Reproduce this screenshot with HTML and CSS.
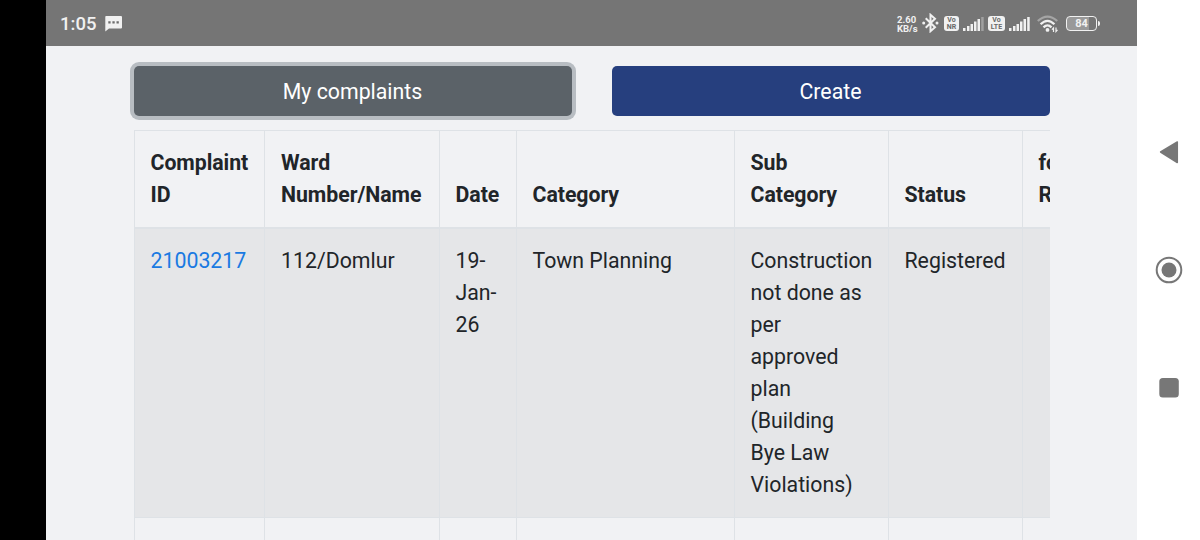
FILE: index.html
```html
<!DOCTYPE html>
<html lang="en">
<head>
    <meta charset="UTF-8">
    <meta name="viewport" content="width=device-width, initial-scale=1.0">
    <title>My complaints</title>
    <link rel="stylesheet" href="styles.css">
</head>
<body>
    <div class="screen">
        <div class="app">
            <!-- Status bar -->
            <header class="status-bar">
                <span class="time">1:05</span>
                <svg class="chat" width="17" height="16" viewBox="0 0 17 16">
                    <path fill="#f1f1f1" d="M1 0h15a1 1 0 0 1 1 1v10.500a1 1 0 0 1-1 1H4L.3 15.500V1a1 1 0 0 1 .7-1z"/>
                    <path fill="#6d6d6d" d="M3.300 5.200h2.300v2.300H3.300zM7.400 5.200h2.300v2.300H7.400zM11.500 5.200h2.300v2.300h-2.300z"/>
                </svg>
                <div class="status-icons">
                    <span class="speed"><b>2.60</b><b>KB/s</b></span>
                    <svg class="bluetooth" width="17" height="20" viewBox="0 0 17 20">
                        <path fill="none" stroke="#f1f1f1" stroke-width="2" d="M3.700 5.200l9.300 9-4.500 4V1.800l4.500 4-9.300 9"/>
                        <circle cx="1.700" cy="10" r="1.500" fill="#f1f1f1"/>
                        <circle cx="15" cy="10" r="1.500" fill="#f1f1f1"/>
                    </svg>
                    <span class="volte"><b>Vo</b><b>NR</b></span>
                    <svg class="signal" width="21" height="14" viewBox="0 0 21 14">
                        <path fill="#f1f1f1" d="M0 11h2.500v3H0zM4 9h2.500v5H4zM7.500 7H10v7H7.500zM11 4.500h2.500V14H11zM14.500 2H17v12h-2.500z"/>
                        <path fill="#a0a0a0" d="M18.200 0h2.500v14h-2.500z"/>
                    </svg>
                    <span class="volte volte-second"><b>Vo</b><b>LTE</b></span>
                    <svg class="signal" width="21" height="14" viewBox="0 0 21 14">
                        <path fill="#f1f1f1" d="M0 11h2.500v3H0zM4 9h2.500v5H4zM7.500 7H10v7H7.500zM11 4.500h2.500V14H11zM14.500 2H17v12h-2.500zM18.200 0h2.500v14h-2.500z"/>
                    </svg>
                    <svg class="wifi" width="22" height="18" viewBox="0 0 22 18">
                        <g fill="none" stroke-width="2.300">
                            <path stroke="#a5a5a5" d="M.8 6Q10.500-2.800 20.200 6"/>
                            <path stroke="#f1f1f1" d="M3.600 9.300Q10.500 2.300 17.400 9.300M6.500 12.400Q10.500 8.400 14.500 12.400"/>
                        </g>
                        <circle cx="10.500" cy="14.900" r="1.900" fill="#f1f1f1"/>
                        <path fill="none" stroke="#f1f1f1" stroke-width="1.200" d="M16.500 17v-4l-1.500 1.700M19 12.500v4l1.500-1.700"/>
                    </svg>
                    <span class="battery">84</span>
                </div>
            </header>

            <main class="content">
                <div class="buttons">
                    <button type="button" class="btn btn-secondary">My complaints</button>
                    <button type="button" class="btn btn-primary">Create</button>
                </div>

                <div class="table-wrap">
                    <table class="table">
                        <colgroup>
                            <col class="col-id">
                            <col class="col-ward">
                            <col class="col-date">
                            <col class="col-category">
                            <col class="col-sub">
                            <col class="col-status">
                            <col class="col-reopen">
                        </colgroup>
                        <thead>
                            <tr>
                                <th>Complaint ID</th>
                                <th>Ward Number/Name</th>
                                <th>Date</th>
                                <th>Category</th>
                                <th>Sub Category</th>
                                <th>Status</th>
                                <th>for<br>Reopen</th>
                            </tr>
                        </thead>
                        <tbody>
                            <tr>
                                <td><a href="#">21003217</a></td>
                                <td>112/Domlur</td>
                                <td>19-<br>Jan-<br>26</td>
                                <td>Town Planning</td>
                                <td>Construction not done as per approved plan (Building Bye Law Violations)</td>
                                <td>Registered</td>
                                <td></td>
                            </tr>
                            <tr class="next-row">
                                <td></td>
                                <td></td>
                                <td></td>
                                <td></td>
                                <td></td>
                                <td></td>
                                <td></td>
                            </tr>
                        </tbody>
                    </table>
                </div>
            </main>
        </div>

        <!-- Phone navigation -->
        <nav class="phone-nav">
            <svg width="28" height="28" viewBox="0 0 28 28">
                <path fill="#777" stroke="#777" stroke-width="1.500" stroke-linejoin="round" d="M5.600 14L22.300 4v20.500z"/>
            </svg>
            <svg width="28" height="28" viewBox="0 0 28 28">
                <circle cx="14" cy="14" r="12.300" fill="none" stroke="#777" stroke-width="2"/>
                <circle cx="14" cy="14" r="7.500" fill="#777"/>
            </svg>
            <svg width="28" height="28" viewBox="0 0 28 28">
                <rect x="4.300" y="4" width="19.500" height="19.500" rx="3.500" fill="#777"/>
            </svg>
        </nav>
    </div>
</body>
</html>
```
FILE: styles.css
```css
* {
    box-sizing: border-box;
}

body {
    margin: 0;
    font-family: Roboto, sans-serif;
    font-size: 21.3px;
    line-height: 32px;
    color: #212529;
    background: #000;
}

.screen {
    display: flex;
    height: 540px;
    padding-left: 46px;
    overflow: hidden;
}

.app {
    flex: 1;
    height: 540px;
    overflow: hidden;
    background: #f1f2f4;
}

.status-bar {
    display: flex;
    align-items: center;
    height: 46px;
    padding: 1px 37px 0 14px;
    background: #757575;
    color: #f1f1f1;
}

.time {
    width: 45px;
    font-size: 18.5px;
    font-weight: 500;
    white-space: nowrap;
}

.status-icons {
    display: flex;
    align-items: center;
    margin-left: auto;
}

.speed {
    display: flex;
    flex-direction: column;
    width: 21px;
    margin-right: 4px;
    font-size: 9.5px;
    line-height: 9px;
}

.bluetooth {
    margin-right: 5px;
    margin-top: -2px;
}

.volte {
    display: flex;
    flex-direction: column;
    align-items: center;
    justify-content: center;
    width: 15px;
    height: 15px;
    margin-right: 4px;
    border-radius: 3px;
    background: #f1f1f1;
    color: #696969;
    font-size: 7px;
    line-height: 6.5px;
}

.volte-second {
    width: 17px;
    margin-left: 4px;
}

.wifi {
    margin-left: 7px;
    margin-right: 7px;
}

.battery {
    position: relative;
    width: 31px;
    height: 15px;
    margin-right: 3px;
    border: 1.5px solid #f1f1f1;
    border-radius: 4px;
    background: linear-gradient(90deg, #999 75%, #757575 75%);
    font-size: 11px;
    font-weight: 700;
    line-height: 13px;
    text-align: center;
}

.battery::after {
    content: "";
    position: absolute;
    top: 4px;
    right: -4px;
    width: 2px;
    height: 5px;
    border-radius: 0 2px 2px 0;
    background: #f1f1f1;
}

.content {
    width: 916px;
    margin-left: 87.5px;
    padding-top: 20px;
}

.buttons {
    display: grid;
    grid-template-columns: 438px 438px;
    gap: 40px;
}

.btn {
    height: 50px;
    padding: 1px 0 0;
    border: 0;
    border-radius: 5px;
    color: #fff;
    font: inherit;
    cursor: pointer;
}

.btn-secondary {
    background: #5b6268;
    box-shadow: 0 0 0 4px #b8bdc2;
}

.btn-primary {
    background: #263f7e;
}

.table-wrap {
    margin-top: 14px;
    overflow: hidden;
}

.table {
    width: 978px;
    border-collapse: collapse;
    table-layout: fixed;
}

.col-id { width: 130.5px; }
.col-ward { width: 174.5px; }
.col-date { width: 77px; }
.col-category { width: 218px; }
.col-sub { width: 154px; }
.col-status { width: 134px; }
.col-reopen { width: 90px; }

th,
td {
    padding: 16px;
    border: 1px solid #dee2e6;
    text-align: left;
    vertical-align: top;
}

th {
    vertical-align: bottom;
    border-bottom-width: 2px;
    font-weight: 700;
    letter-spacing: -0.05px;
}

tbody tr:nth-child(odd) {
    background: #e5e6e8;
}

.next-row td {
    height: 80px;
}

a {
    color: #1a7ae2;
    text-decoration: none;
}

.phone-nav {
    display: flex;
    flex-direction: column;
    align-items: center;
    gap: 90px;
    width: 63px;
    padding-top: 138px;
    background: #fff;
}
```
